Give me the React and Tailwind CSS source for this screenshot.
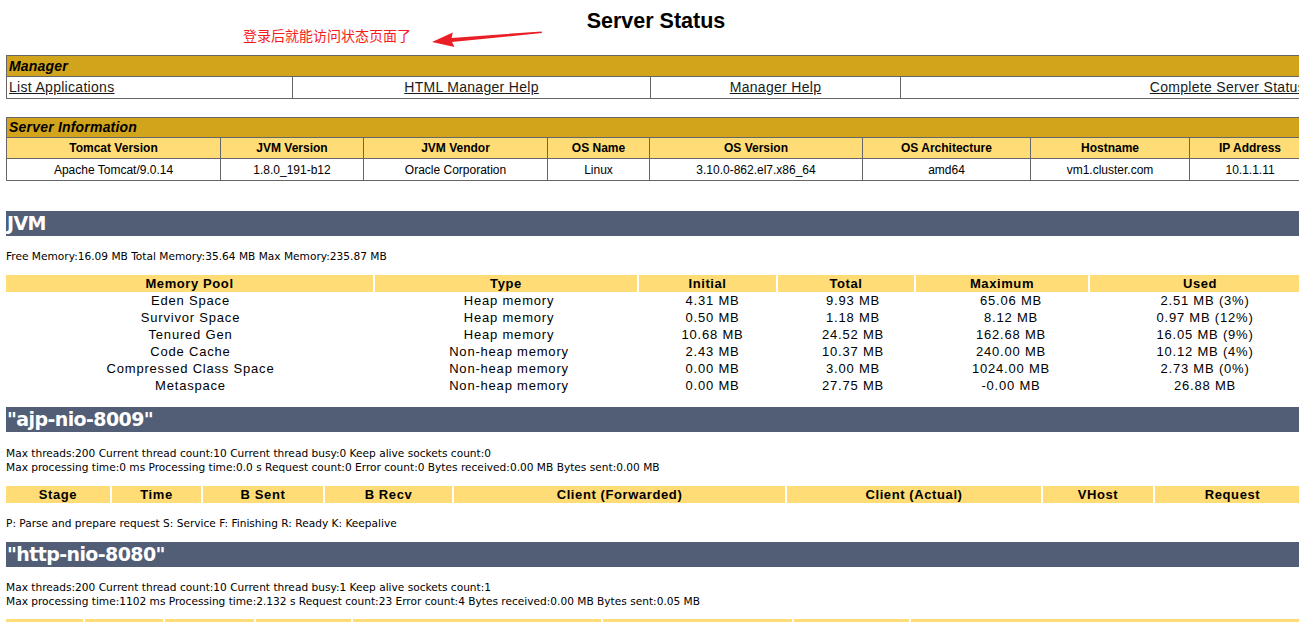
const SANS = { fontFamily: '"Liberation Sans", Arial, sans-serif' };

const serverCols = [
  { w: 'w-[214px]', head: 'Tomcat Version', val: 'Apache Tomcat/9.0.14' },
  { w: 'w-[143px]', head: 'JVM Version', val: '1.8.0_191-b12' },
  { w: 'w-[184px]', head: 'JVM Vendor', val: 'Oracle Corporation' },
  { w: 'w-[102px]', head: 'OS Name', val: 'Linux' },
  { w: 'w-[213px]', head: 'OS Version', val: '3.10.0-862.el7.x86_64' },
  { w: 'w-[168px]', head: 'OS Architecture', val: 'amd64' },
  { w: 'w-[159px]', head: 'Hostname', val: 'vm1.cluster.com' },
  { w: 'w-[121px]', head: 'IP Address', val: '10.1.1.11' },
];

const memCols = [
  { w: 'w-[369px]', head: 'Memory Pool' },
  { w: 'w-[264px]', head: 'Type' },
  { w: 'w-[139px]', head: 'Initial' },
  { w: 'w-[138px]', head: 'Total' },
  { w: 'w-[174px]', head: 'Maximum' },
  { w: 'flex-1', head: 'Used' },
];

const memRows = [
  ['Eden Space', 'Heap memory', '4.31 MB', '9.93 MB', '65.06 MB', '2.51 MB (3%)'],
  ['Survivor Space', 'Heap memory', '0.50 MB', '1.18 MB', '8.12 MB', '0.97 MB (12%)'],
  ['Tenured Gen', 'Heap memory', '10.68 MB', '24.52 MB', '162.68 MB', '16.05 MB (9%)'],
  ['Code Cache', 'Non-heap memory', '2.43 MB', '10.37 MB', '240.00 MB', '10.12 MB (4%)'],
  ['Compressed Class Space', 'Non-heap memory', '0.00 MB', '3.00 MB', '1024.00 MB', '2.73 MB (0%)'],
  ['Metaspace', 'Non-heap memory', '0.00 MB', '27.75 MB', '-0.00 MB', '26.88 MB'],
];

const stageCols = [
  { w: 'w-[106px]', head: 'Stage' },
  { w: 'w-[91px]', head: 'Time' },
  { w: 'w-[122px]', head: 'B Sent' },
  { w: 'w-[129px]', head: 'B Recv' },
  { w: 'w-[333px]', head: 'Client (Forwarded)' },
  { w: 'w-[256px]', head: 'Client (Actual)' },
  { w: 'w-[112px]', head: 'VHost' },
  { w: 'flex-1', head: 'Request' },
];

const stageCols2 = [
  { w: 'w-[79px]', head: '' },
  { w: 'w-[80px]', head: '' },
  { w: 'w-[91px]', head: '' },
  { w: 'w-[97px]', head: '' },
  { w: 'w-[250px]', head: '' },
  { w: 'w-[191px]', head: '' },
  { w: 'w-[117px]', head: '' },
  { w: 'flex-1', head: '' },
];

function Bar({ children, className }) {
  return (
    <div
      className={`h-[25px] bg-[#525D76] text-white font-bold text-[19px] leading-[25px] pl-[1px] tracking-[-0.6px] ${className}`}
      style={{ fontFamily: '"DejaVu Sans", Tahoma, sans-serif' }}
    >
      {children}
    </div>
  );
}

function Small({ lines, className }) {
  return (
    <div
      className={`text-[10.6px] leading-[14px] text-black ${className}`}
      style={{ fontFamily: '"DejaVu Sans", Tahoma, sans-serif' }}
    >
      {lines.map((l) => (
        <div key={l}>{l}</div>
      ))}
    </div>
  );
}

function HeadRow({ cols, className }) {
  return (
    <div className={`flex h-[17px] ${className}`}>
      {cols.map((c, i) => (
        <div
          key={i}
          className={`${c.w} shrink-0 bg-[#FFDC75] text-center font-bold text-[13px] leading-[17px] tracking-[0.6px] ${i < cols.length - 1 ? 'border-r-2 border-white' : ''}`}
        >
          {c.head}
        </div>
      ))}
    </div>
  );
}

export default function App() {
  return (
    <div className="w-full h-[622px] overflow-hidden bg-white text-black" style={SANS}>
      <div className="w-[1310px]">
        {/* Title + annotation */}
        <div className="relative h-[55px] flex justify-center">
          <h1 className="text-[21.5px] font-bold leading-[24px] mt-[9px] pl-[2px]">Server Status</h1>
          <span
            className="absolute left-[243px] top-[26px] text-[14px] leading-[18px] text-[#f41c1c]"
            style={{ fontFamily: '"Noto Sans CJK SC", sans-serif' }}
          >
            登录后就能访问状态页面了
          </span>
          <svg className="absolute left-[425px] top-[25px]" width="125" height="25" viewBox="0 0 125 25">
            <polygon points="7,17 29.5,22 27,17 117,8 116.6,6.4 26.6,13 27.8,7.5" fill="#ea1f26" />
          </svg>
        </div>

        {/* Manager */}
        <table className="ml-[6px] w-[1304px] table-fixed border-collapse border border-[#666] text-[14px] tracking-[0.3px]">
          <colgroup>
            <col className="w-[286px]" />
            <col className="w-[358px]" />
            <col className="w-[250px]" />
            <col />
          </colgroup>
          <tbody>
            <tr className="h-[20px] bg-[#D2A41C]">
              <td colSpan={4} className="px-[2px] font-bold italic leading-[20px] border border-[#666] tracking-[0.2px]">
                Manager
              </td>
            </tr>
            <tr className="h-[22px]">
              <td className="border border-[#666] px-[2px] text-left">
                <a className="underline text-[#1a1a1a]">List Applications</a>
              </td>
              <td className="border border-[#666] text-center">
                <a className="underline text-[#1a1a1a]">HTML Manager Help</a>
              </td>
              <td className="border border-[#666] text-center">
                <a className="underline text-[#1a1a1a]">Manager Help</a>
              </td>
              <td className="border border-[#666] text-right pr-[4px]">
                <a className="underline text-[#1a1a1a]">Complete Server Status</a>
              </td>
            </tr>
          </tbody>
        </table>

        {/* Server Information */}
        <table className="ml-[6px] mt-[18px] w-[1304px] table-fixed border-collapse border border-[#666] text-[12px]">
          <colgroup>
            {serverCols.map((c) => (
              <col key={c.head} className={c.w} />
            ))}
          </colgroup>
          <tbody>
            <tr className="h-[20px] bg-[#D2A41C]">
              <td colSpan={8} className="px-[2px] font-bold italic text-[14px] tracking-[0.2px] leading-[19px] border border-[#666]">
                Server Information
              </td>
            </tr>
            <tr className="h-[21px] bg-[#FFDC75]">
              {serverCols.map((c) => (
                <td key={c.head} className="border border-[#666] text-center font-bold">
                  {c.head}
                </td>
              ))}
            </tr>
            <tr className="h-[22px]">
              {serverCols.map((c) => (
                <td key={c.head} className="border border-[#666] text-center">
                  {c.val}
                </td>
              ))}
            </tr>
          </tbody>
        </table>

        {/* JVM */}
        <Bar className="ml-[6px] mt-[30px]">JVM</Bar>
        <Small className="ml-[6px] mt-[13px]" lines={['Free Memory:16.09 MB Total Memory:35.64 MB Max Memory:235.87 MB']} />

        <div className="ml-[6px] mt-[12px]">
          <HeadRow cols={memCols} />
          {memRows.map((r) => (
            <div key={r[0]} className="flex h-[17px] text-[13px] leading-[17px] tracking-[0.8px]">
              {memCols.map((c, i) => (
                <div key={i} className={`${c.w} shrink-0 text-center ${i < memCols.length - 1 ? 'mr-[2px]' : ''}`}>
                  {r[i]}
                </div>
              ))}
            </div>
          ))}
        </div>

        {/* ajp-nio-8009 */}
        <Bar className="ml-[6px] mt-[13px]">"ajp-nio-8009"</Bar>
        <Small
          className="ml-[6px] mt-[14px]"
          lines={[
            'Max threads:200 Current thread count:10 Current thread busy:0 Keep alive sockets count:0',
            'Max processing time:0 ms Processing time:0.0 s Request count:0 Error count:0 Bytes received:0.00 MB Bytes sent:0.00 MB',
          ]}
        />
        <HeadRow cols={stageCols} className="ml-[6px] mt-[12px]" />
        <Small className="ml-[6px] mt-[13px]" lines={['P: Parse and prepare request S: Service F: Finishing R: Ready K: Keepalive']} />

        {/* http-nio-8080 */}
        <Bar className="ml-[6px] mt-[12px]">"http-nio-8080"</Bar>
        <Small
          className="ml-[6px] mt-[13px]"
          lines={[
            'Max threads:200 Current thread count:10 Current thread busy:1 Keep alive sockets count:1',
            'Max processing time:1102 ms Processing time:2.132 s Request count:23 Error count:4 Bytes received:0.00 MB Bytes sent:0.05 MB',
          ]}
        />
        <HeadRow cols={stageCols2} className="ml-[6px] mt-[11px]" />
      </div>
    </div>
  );
}
